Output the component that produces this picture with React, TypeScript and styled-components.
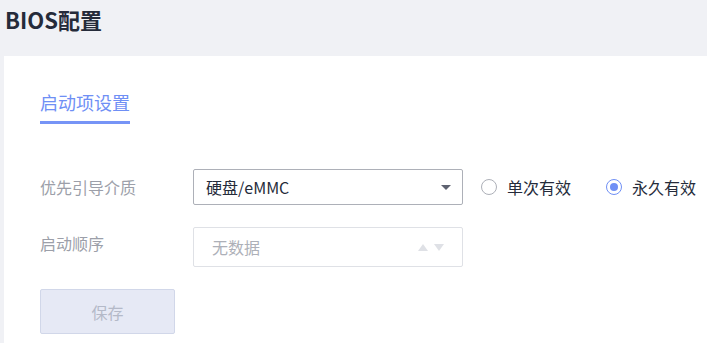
import styled, { createGlobalStyle } from "styled-components";

const GlobalStyle = createGlobalStyle`
  html, body {
    margin: 0;
    padding: 0;
    background: #f0f1f5;
    font-family: "Noto Sans CJK SC", "Noto Sans", sans-serif;
  }
  * { box-sizing: border-box; }
`;

const App = () => {
  return (
    <Page>
      <GlobalStyle />
      <Header>BIOS配置</Header>
      <Card>
        <Tabs>
          <Tab>启动项设置</Tab>
        </Tabs>
        <Form>
          <Row>
            <Label>优先引导介质</Label>
            <Select>
              <span>硬盘/eMMC</span>
              <Caret />
            </Select>
            <RadioGroup>
              <RadioItem>
                <RadioCircle />
                <RadioText>单次有效</RadioText>
              </RadioItem>
              <RadioItem>
                <RadioCircle checked />
                <RadioText>永久有效</RadioText>
              </RadioItem>
            </RadioGroup>
          </Row>
          <Row>
            <Label $offset={-4}>启动顺序</Label>
            <DisabledBox>
              <span>无数据</span>
              <Arrows>
                <Triangle $up />
                <Triangle />
              </Arrows>
            </DisabledBox>
          </Row>
          <SaveButton disabled>保存</SaveButton>
        </Form>
      </Card>
    </Page>
  );
};

export default App;

const Page = styled.div`
  width: 707px;
  height: 343px;
  overflow: hidden;
  display: flex;
  flex-direction: column;
`;

const Header = styled.div`
  flex-shrink: 0;
  height: 56px;
  padding: 4px 0 0 5px;
  font-size: 22px;
  font-weight: 700;
  line-height: 30px;
  color: #252b3a;
`;

const Card = styled.div`
  flex: 1 0 auto;
  margin-left: 4px;
  background: #ffffff;
  padding: 33px 0 0 36px;
  white-space: nowrap;
`;

const Tabs = styled.div`
  display: flex;
`;

const Tab = styled.div`
  font-size: 18px;
  line-height: 26px;
  color: #6f8ff5;
  padding-bottom: 6px;
  border-bottom: 3px solid #7694f6;
`;

const Form = styled.div`
  margin-top: 45px;
  display: flex;
  flex-direction: column;
  align-items: flex-start;
  gap: 22px;
`;

const Row = styled.div`
  display: flex;
  align-items: center;
  & > * {
    flex-shrink: 0;
  }
`;

const Label = styled.div<{ $offset?: number }>`
  width: 153px;
  font-size: 16px;
  color: #9c9fa9;
  position: relative;
  top: ${(p) => p.$offset ?? 0}px;
`;

const Select = styled.div`
  width: 270px;
  height: 36px;
  border: 1px solid #adb0b8;
  border-radius: 2px;
  display: flex;
  align-items: center;
  justify-content: space-between;
  padding: 0 11px 0 12px;
  font-size: 16px;
  color: #252b3a;
`;

const Caret = styled.span`
  width: 0;
  height: 0;
  border-left: 5px solid transparent;
  border-right: 5px solid transparent;
  border-top: 5px solid #5e6270;
`;

const RadioGroup = styled.div`
  display: flex;
  align-items: center;
  gap: 35px;
  margin-left: 18px;
`;

const RadioItem = styled.label`
  display: flex;
  align-items: center;
  gap: 10px;
`;

const RadioCircle = styled.span<{ checked?: boolean }>`
  flex-shrink: 0;
  width: 16px;
  height: 16px;
  border-radius: 50%;
  border: 1px solid ${(p) => (p.checked ? "#6f8ff5" : "#adb0b8")};
  display: flex;
  align-items: center;
  justify-content: center;
  &::after {
    content: "";
    width: 8px;
    height: 8px;
    border-radius: 50%;
    background: ${(p) => (p.checked ? "#6f8ff5" : "transparent")};
  }
`;

const RadioText = styled.span`
  font-size: 16px;
  color: #252b3a;
`;

const DisabledBox = styled.div`
  width: 270px;
  height: 40px;
  border: 1px solid #dfe1e6;
  border-radius: 2px;
  display: flex;
  align-items: center;
  justify-content: space-between;
  padding: 0 18px 0 18px;
  font-size: 16px;
  color: #adb0b8;
`;

const Arrows = styled.div`
  display: flex;
  gap: 6px;
`;

const Triangle = styled.span<{ $up?: boolean }>`
  width: 0;
  height: 0;
  border-left: 5px solid transparent;
  border-right: 5px solid transparent;
  ${(p) =>
    p.$up
      ? "border-bottom: 7px solid #dfe1e6;"
      : "border-top: 7px solid #dfe1e6;"}
`;

const SaveButton = styled.button`
  width: 135px;
  height: 45px;
  background: #e6e9f5;
  border: 1px solid #d1d7e9;
  border-radius: 2px;
  font-family: inherit;
  font-size: 16px;
  color: #b4b9c8;
  padding: 0;
`;
